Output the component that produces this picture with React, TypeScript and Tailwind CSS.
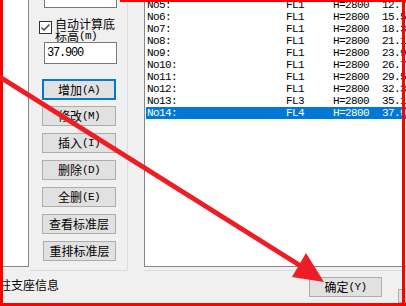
import React from "react";

const M = ({ children }: { children: React.ReactNode }) => (
  <span className="font-['Liberation_Mono',monospace] text-[11px] leading-[12px] tracking-[-0.6px]">{children}</span>
);

const Btn = ({ cn, ascii, focused }: { cn: string; ascii?: string; focused?: boolean }) => (
  <div
    className={
      "flex items-center justify-center bg-[#e1e1e1] leading-[14px] whitespace-nowrap " +
      (focused ? "border-2 border-[#0078d7] h-[21px]" : "border border-[#adadad] h-[20px]")
    }
  >
    <span>{cn}</span>
    {ascii ? <M>{ascii}</M> : null}
  </div>
);

const rows = [
  ["No5:", "FL1", "12.700"],
  ["No6:", "FL1", "15.500"],
  ["No7:", "FL1", "18.300"],
  ["No8:", "FL1", "21.100"],
  ["No9:", "FL1", "23.900"],
  ["No10:", "FL1", "26.700"],
  ["No11:", "FL1", "29.500"],
  ["No12:", "FL1", "32.300"],
  ["No13:", "FL3", "35.100"],
  ["No14:", "FL4", "37.900"],
];

export default function App() {
  return (
    <div className="relative w-[406px] h-[306px] overflow-hidden bg-[#f0f0f0] text-black text-[12px] leading-[14px] font-['Noto_Sans_CJK_SC',sans-serif]">
      {/* top area */}
      <div className="flex h-[271px]">
        {/* left white list */}
        <div className="w-[29px] h-[267px] bg-white border-r border-b border-[#828790] shrink-0" />
        {/* group box */}
        <div className="w-[99px] h-[271px] border-r border-b border-[#dcdcdc] shrink-0 flex flex-col">
          <div className="ml-[15px] mt-[-14px] w-[73px] h-[22px] bg-white border border-[#7a7a7a] shrink-0" />
          <div className="flex mt-[10px] ml-[10px] h-[24px] shrink-0">
            <div className="mt-[3px] w-[13px] h-[13px] bg-white border border-[#333333] flex items-center justify-center shrink-0">
              <svg width="11" height="11" viewBox="0 0 11 11">
                <path d="M1.5 5.5 L4 8 L9.5 2.5" stroke="#555555" strokeWidth="1.6" fill="none" />
              </svg>
            </div>
            <div className="ml-[3px] whitespace-nowrap">
              <div className="h-[12px] leading-[12px]">自动计算底</div>
              <div className="h-[12px] leading-[12px] flex items-center">
                <span>标高</span>
                <M>(m)</M>
              </div>
            </div>
          </div>
          <div className="ml-[15px] mt-0 w-[73px] h-[22px] bg-white border border-[#7a7a7a] flex items-center pl-[2px] shrink-0">
            <span className="font-['Liberation_Mono',monospace] text-[12px] leading-[14px] tracking-[-1.2px]">37.900</span>
          </div>
          <div className="ml-[13px] w-[74px] mt-[15px] flex flex-col gap-[7px] shrink-0">
            <Btn cn="增加" ascii="(A)" focused />
            <div className="-mt-[1px]">
              <Btn cn="修改" ascii="(M)" />
            </div>
            <Btn cn="插入" ascii="(I)" />
            <Btn cn="删除" ascii="(D)" />
            <Btn cn="全删" ascii="(E)" />
            <Btn cn="查看标准层" />
            <div className="ml-[1px]">
              <Btn cn="重排标准层" />
            </div>
          </div>
        </div>
        {/* right list group */}
        <div className="ml-[16px] flex-1 h-[271px] border-b border-[#dcdcdc]">
          <div className="h-[267px] bg-white border-l border-b border-[#828790] pl-[1px] overflow-hidden">
            <div className="-mt-[1px]">
              {rows.map((r, i) => {
                const sel = i === rows.length - 1;
                return (
                  <div
                    key={r[0]}
                    className={
                      "flex h-[12px] leading-[12px] whitespace-nowrap font-['Liberation_Mono',monospace] text-[11px] tracking-[-0.6px] " +
                      (sel ? "bg-[#0078d7] text-white" : "text-black")
                    }
                  >
                    <span className="w-[140px] pl-[1px] shrink-0">{r[0]}</span>
                    <span className="w-[47px] shrink-0">{r[1]}</span>
                    <span className="w-[49px] shrink-0">H=2800</span>
                    <span className="shrink-0">{r[2]}</span>
                  </div>
                );
              })}
            </div>
          </div>
        </div>
      </div>
      {/* bottom area */}
      <div className="flex">
        <div className="ml-[-1px] mt-[7px] whitespace-nowrap w-[60px] shrink-0">柱支座信息</div>
        <div className="ml-[250px] mt-[6px] w-[73px] shrink-0">
          <Btn cn="确定" ascii="(Y)" />
        </div>
        <div className="ml-[16px] mt-[18px] w-[60px] h-[14px] bg-[#e1e1e1] border border-[#adadad] shrink-0" />
      </div>

      {/* red annotation frame */}
      <div className="absolute left-0 top-0 w-[3px] h-[306px] bg-[#ff0000]" />
      <div className="absolute left-[120px] top-0 w-[286px] h-[2px] bg-[#ff0000]" />
      <div className="absolute left-[402px] top-0 w-[3px] h-[306px] bg-[#ff0000]" />
      <div className="absolute left-0 top-[303px] w-[406px] h-[3px] bg-[#ff0000]" />
      {/* red arrow */}
      <svg className="absolute left-0 top-0" width="406" height="306" viewBox="0 0 406 306">
        <line x1="-5" y1="74" x2="300" y2="265.5" stroke="#ee1c24" strokeWidth="5" />
        <polygon points="324,282 306,253 292,277" fill="#ee1c24" />
      </svg>
    </div>
  );
}
